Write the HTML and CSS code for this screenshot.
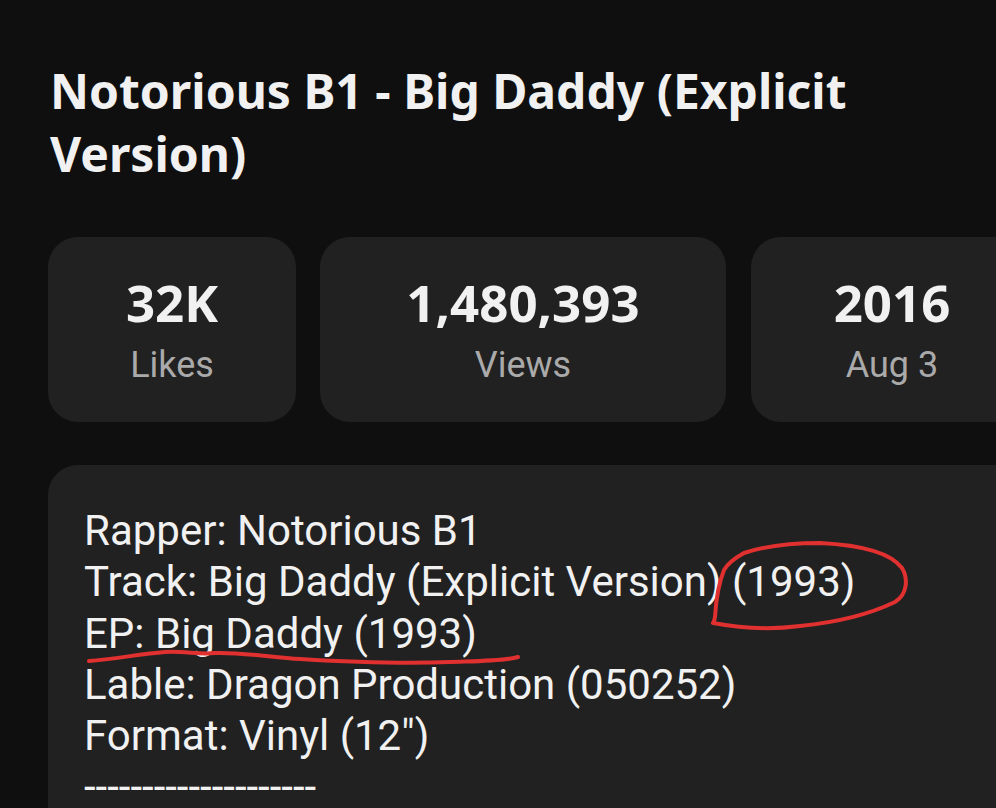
FILE: index.html
```html
<!DOCTYPE html>
<html>
<head>
<meta charset="utf-8">
<link rel="stylesheet" href="styles.css">
</head>
<body>
<div class="page">
  <h1 class="title">Notorious B1 - Big Daddy (Explicit Version)</h1>
  <div class="stats">
    <div class="stat stat-likes"><div class="num">32K</div><div class="lbl">Likes</div></div>
    <div class="stat stat-views"><div class="num">1,480,393</div><div class="lbl">Views</div></div>
    <div class="stat stat-date"><div class="num">2016</div><div class="lbl">Aug 3</div></div>
  </div>
  <div class="desc">
    <div class="line">Rapper: Notorious B1</div>
    <div class="line">Track: Big Daddy (Explicit Version) (1993)</div>
    <div class="line">EP: Big Daddy (1993)</div>
    <div class="line">Lable: Dragon Production (050252)</div>
    <div class="line">Format: Vinyl (12")</div>
    <div class="line dashes">--------------------</div>
  </div>
  <svg class="marks" width="996" height="808" viewBox="0 0 996 808">
    <path d="M744 553 C735 558 728 563 724 570 C718 585 716 600 715 617 C714 622 713 623 713 623 C740 628 770 630 800 626 C840 622 870 614 895 602 C908 594 908 578 902 568 C890 552 860 545 820 543 C790 543 765 546 744 553" fill="none" stroke="#e0302f" stroke-width="4" stroke-linecap="round" stroke-linejoin="round"/>
    <path d="M89 661 C115 659 140 654 165 652 C185 651 200 655 215 653 C240 652 270 657 300 659 C350 662 400 664 450 662 C480 661 505 661 518 657" fill="none" stroke="#e0302f" stroke-width="4" stroke-linecap="round"/>
  </svg>
</div>
</body>
</html>
```
FILE: styles.css
```css
html, body {
  margin: 0;
  padding: 0;
  background: #0f0f0f;
}
body {
  width: 996px;
  height: 808px;
  overflow: hidden;
}
.page {
  position: relative;
  padding: 59px 0 0 48px;
  height: 808px;
  box-sizing: border-box;
  overflow: hidden;
}
.title {
  margin: 0 0 0 2px;
  width: 830px;
  font-family: "Noto Sans", sans-serif;
  font-weight: 700;
  font-size: 48px;
  line-height: 63px;
  color: #f1f1f1;
}
.stats {
  display: flex;
  gap: 24px;
  margin-top: 52px;
  width: 1100px;
}
.stat {
  flex: none;
  height: 185px;
  background: #212121;
  border-radius: 30px;
  display: flex;
  flex-direction: column;
  align-items: center;
  box-sizing: border-box;
  padding-top: 37px;
}
.stat-likes { width: 248px; }
.stat-views { width: 406px; }
.stat-date { width: 282px; margin-left: 1px; }
.num {
  font-family: "Noto Sans", sans-serif;
  font-weight: 700;
  font-size: 51px;
  line-height: 56px;
  color: #f1f1f1;
}
.lbl {
  font-family: Roboto, sans-serif;
  font-size: 36px;
  line-height: 40px;
  margin-top: 15px;
  color: #aaaaaa;
}
.desc {
  margin-top: 43px;
  width: 1000px;
  height: 400px;
  background: #212121;
  border-radius: 30px;
  padding: 40px 0 0 36px;
  box-sizing: border-box;
}
.line {
  font-family: Roboto, sans-serif;
  font-size: 42px;
  line-height: 51.3px;
  color: #f1f1f1;
  white-space: nowrap;
}
.dashes {
  line-height: 40px;
  margin-top: 6px;
}
.marks {
  position: absolute;
  left: 0;
  top: 0;
  pointer-events: none;
}
```
